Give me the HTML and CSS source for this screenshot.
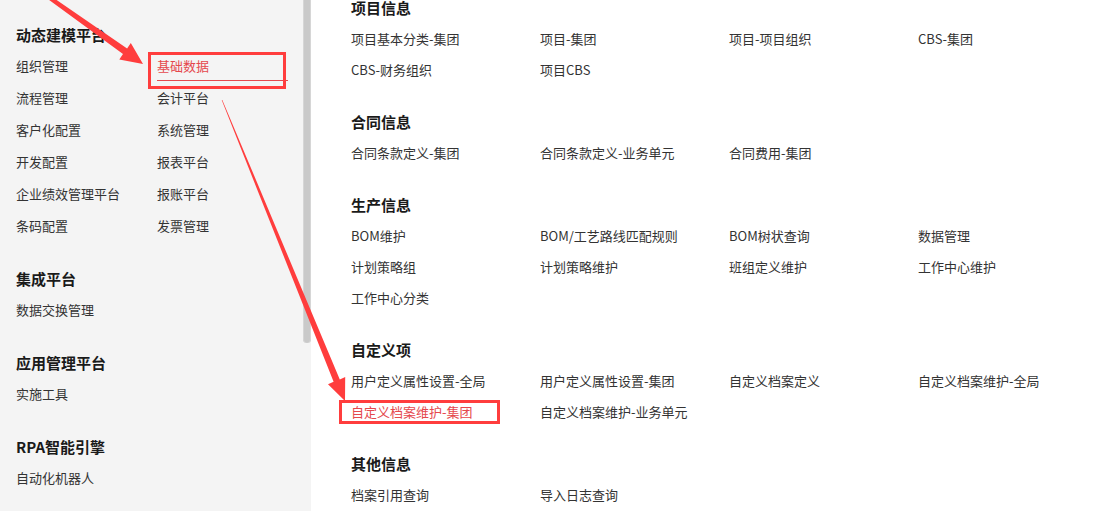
FILE: index.html
```html
<!DOCTYPE html>
<html lang="zh-CN">
<head>
    <meta charset="UTF-8">
    <title>应用中心</title>
    <link rel="stylesheet" href="styles.css">
</head>
<body>
<div class="page">
    <!--左侧平台导航-->
    <aside class="side">
        <section class="group">
            <h3>动态建模平台</h3>
            <ul class="links">
                <li>组织管理</li>
                <li class="active">基础数据</li>
                <li>流程管理</li>
                <li>会计平台</li>
                <li>客户化配置</li>
                <li>系统管理</li>
                <li>开发配置</li>
                <li>报表平台</li>
                <li>企业绩效管理平台</li>
                <li>报账平台</li>
                <li>条码配置</li>
                <li>发票管理</li>
            </ul>
        </section>
        <section class="group">
            <h3>集成平台</h3>
            <ul class="links">
                <li>数据交换管理</li>
            </ul>
        </section>
        <section class="group">
            <h3>应用管理平台</h3>
            <ul class="links">
                <li>实施工具</li>
            </ul>
        </section>
        <section class="group">
            <h3>RPA智能引擎</h3>
            <ul class="links">
                <li>自动化机器人</li>
            </ul>
        </section>
        <div class="thumb"></div>
    </aside>

    <!--右侧节点列表-->
    <main class="content">
        <section class="block">
            <h3>项目信息</h3>
            <ul class="nodes">
                <li>项目基本分类-集团</li>
                <li>项目-集团</li>
                <li>项目-项目组织</li>
                <li>CBS-集团</li>
                <li>CBS-财务组织</li>
                <li>项目CBS</li>
            </ul>
        </section>
        <section class="block">
            <h3>合同信息</h3>
            <ul class="nodes">
                <li>合同条款定义-集团</li>
                <li>合同条款定义-业务单元</li>
                <li>合同费用-集团</li>
            </ul>
        </section>
        <section class="block">
            <h3>生产信息</h3>
            <ul class="nodes">
                <li>BOM维护</li>
                <li>BOM/工艺路线匹配规则</li>
                <li>BOM树状查询</li>
                <li>数据管理</li>
                <li>计划策略组</li>
                <li>计划策略维护</li>
                <li>班组定义维护</li>
                <li>工作中心维护</li>
                <li>工作中心分类</li>
            </ul>
        </section>
        <section class="block">
            <h3>自定义项</h3>
            <ul class="nodes">
                <li>用户定义属性设置-全局</li>
                <li>用户定义属性设置-集团</li>
                <li>自定义档案定义</li>
                <li>自定义档案维护-全局</li>
                <li class="hit">自定义档案维护-集团</li>
                <li>自定义档案维护-业务单元</li>
            </ul>
        </section>
        <section class="block">
            <h3>其他信息</h3>
            <ul class="nodes">
                <li>档案引用查询</li>
                <li>导入日志查询</li>
            </ul>
        </section>
    </main>

    <!--截图标注-->
    <svg class="marks" width="1106" height="511" viewBox="0 0 1106 511">
        <g fill="#ff3d3d">
            <polygon points="48.6,-0.4 123.0,54.1 119.3,59.4 143,64 130.8,43.1 127.1,48.4 51.4,-3.6"/>
            <polygon points="221.7,100.1 333.6,381.8 328.0,384.2 345,401 345.2,377.0 339.8,379.4 222.3,99.9"/>
        </g>
        <g fill="none" stroke="#ff3d3d" stroke-width="3">
            <rect x="149.5" y="53.5" width="135" height="34"/>
            <rect x="340.5" y="401.5" width="158" height="21"/>
        </g>
    </svg>
</div>
</body>
</html>
```

FILE: styles.css
```css
* {
    padding: 0;
    margin: 0;
}
html, body {
    height: 100%;
    overflow: hidden;
    background-color: #fff;
}
body {
    font-family: "Noto Sans CJK SC", "Microsoft YaHei", sans-serif;
    color: #333;
}
ul {
    list-style: none;
}
.page {
    position: relative;
    display: flex;
    height: 511px;
}
.side {
    position: relative;
    flex: 0 0 311px;
    padding: 19px 0 0 16px;
    box-sizing: border-box;
    background-color: #f4f4f4;
}
.group {
    margin-bottom: 21px;
}
.group h3 {
    font-size: 15px;
    line-height: 31px;
    font-weight: bold;
    color: #1a1a1a;
}
.links {
    display: grid;
    grid-template-columns: 141px 141px;
}
.links li {
    font-size: 13px;
    line-height: 32px;
}
.links .active {
    position: relative;
    color: #e5484d;
}
.links .active::after {
    content: "";
    position: absolute;
    left: 0;
    bottom: 1px;
    width: 131px;
    height: 1px;
    background-color: #e5484d;
}
.thumb {
    position: absolute;
    top: 0;
    right: 0;
    width: 8px;
    height: 343px;
    border-radius: 0 0 4px 4px;
    background-color: #c9c9c9;
    box-shadow: inset 1px 0 0 #d6d6d6, inset -1px 0 0 #d6d6d6;
}
.content {
    flex: 1;
    padding-left: 40px;
    margin-top: -8px;
}
.block {
    margin-bottom: 21px;
}
.block h3 {
    font-size: 15px;
    line-height: 31px;
    font-weight: bold;
    color: #1a1a1a;
}
.nodes {
    display: grid;
    grid-template-columns: repeat(4, 189px);
}
.nodes li {
    font-size: 13px;
    line-height: 31px;
    white-space: nowrap;
}
.nodes .hit {
    color: #e5484d;
}
.marks {
    position: absolute;
    left: 0;
    top: 0;
    pointer-events: none;
}
```
